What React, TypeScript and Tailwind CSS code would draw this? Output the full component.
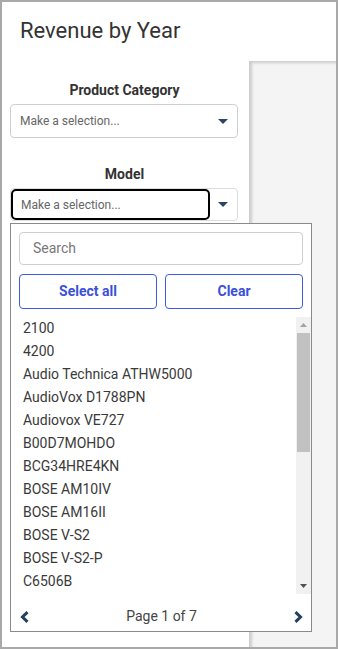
import React from "react";

const items = [
  "2100",
  "4200",
  "Audio Technica ATHW5000",
  "AudioVox D1788PN",
  "Audiovox VE727",
  "B00D7MOHDO",
  "BCG34HRE4KN",
  "BOSE AM10IV",
  "BOSE AM16II",
  "BOSE V-S2",
  "BOSE V-S2-P",
  "C6506B",
];

function Caret() {
  return (
    <svg width="10" height="5" viewBox="0 0 10 5" className="shrink-0">
      <path d="M0 0 L10 0 L5 5 Z" fill="#2b4562" />
    </svg>
  );
}

function Chevron({ dir }: { dir: "left" | "right" }) {
  return (
    <svg width="9" height="12" viewBox="0 0 9 12">
      {dir === "left" ? (
        <path d="M7.5 1.2 L2.5 6 L7.5 10.8" fill="none" stroke="#23405f" strokeWidth="3" />
      ) : (
        <path d="M1.5 1.2 L6.5 6 L1.5 10.8" fill="none" stroke="#23405f" strokeWidth="3" />
      )}
    </svg>
  );
}

export default function App() {
  return (
    <div className="relative w-[338px] h-[649px] border-2 border-[#a9a9a9] bg-white flex flex-col font-['Roboto',sans-serif] text-[#333]">
      <div className="h-[59px] shrink-0 pl-[18px] pt-[15px]">
        <div className="text-[22px] leading-[28px] text-[#333]">Revenue by Year</div>
      </div>
      <div className="flex flex-1">
        <div className="w-[247px] shrink-0 flex flex-col">
          <div className="pt-[19px] pr-[2px] text-center text-[14px] leading-[20px] font-bold text-[#333]">
            Product Category
          </div>
          <div className="mt-[4px] ml-[8px] w-[228px] h-[34px] border border-[#cfcfcf] rounded-[4px] flex items-center pl-[9px] pr-[9px] justify-between">
            <span className="text-[12px] text-[#666]">Make a selection...</span>
            <Caret />
          </div>
          <div className="mt-[26px] pr-[2px] text-center text-[14px] leading-[20px] font-bold text-[#333]">
            Model
          </div>
          <div className="mt-[4px] ml-[8px] w-[228px] h-[33px] border border-[#dcdcdc] rounded-[4px] flex items-center justify-between pr-[9px]">
            <div className="w-[199px] h-[31px] border-2 border-black rounded-[5px] flex items-center pl-[8px]">
              <span className="text-[12px] text-[#666]">Make a selection...</span>
            </div>
            <Caret />
          </div>
        </div>
        <div className="flex-1 bg-[#f4f4f4] shadow-[inset_3px_2px_3px_rgba(0,0,0,0.16)]"></div>
      </div>

      <div className="absolute left-[8px] top-[221px] w-[302px] h-[409px] border border-[#8a8a8a] bg-white flex flex-col">
        <div className="px-[8px] pt-[8px]">
          <div className="h-[33px] border border-[#cfcfcf] rounded-[4px] flex items-center pl-[13px] text-[14px] text-[#777]">
            Search
          </div>
          <div className="mt-[9px] flex gap-[8px]">
            <button className="flex-1 h-[35px] border border-[#3b5ce0] rounded-[4px] text-[14px] font-bold text-[#3b50d8] bg-white">
              Select all
            </button>
            <button className="flex-1 h-[35px] border border-[#3b5ce0] rounded-[4px] text-[14px] font-bold text-[#3b50d8] bg-white">
              Clear
            </button>
          </div>
        </div>
        <div className="mt-[8px] h-[277px] flex">
          <div className="flex-1 flex flex-col">
            {items.map((it) => (
              <div key={it} className="h-[23px] leading-[23px] pl-[12px] text-[14px] text-[#3a3a3a]">
                {it}
              </div>
            ))}
          </div>
          <div className="w-[15px] bg-[#f1f1f1] flex flex-col items-center">
            <div className="h-[16px] flex items-center justify-center">
              <svg width="7" height="4" viewBox="0 0 7 4">
                <path d="M0 4 L7 4 L3.5 0 Z" fill="#a3a3a3" />
              </svg>
            </div>
            <div className="w-[13px] h-[119px] bg-[#c1c1c1]"></div>
            <div className="flex-1"></div>
            <div className="h-[16px] flex items-center justify-center">
              <svg width="7" height="4" viewBox="0 0 7 4">
                <path d="M0 0 L7 0 L3.5 4 Z" fill="#505050" />
              </svg>
            </div>
          </div>
        </div>
        <div className="flex-1 flex items-center justify-between pl-[9px] pr-[8px] pt-[8px]">
          <Chevron dir="left" />
          <span className="text-[14px] text-[#444]">Page 1 of 7</span>
          <Chevron dir="right" />
        </div>
      </div>
    </div>
  );
}
